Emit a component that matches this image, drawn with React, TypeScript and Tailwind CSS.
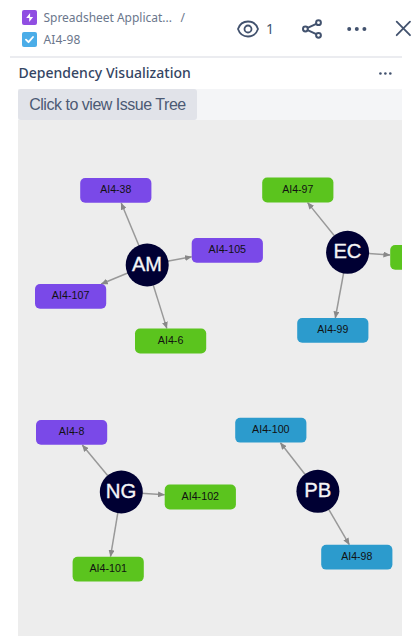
import React from "react";

const PURPLE = "#7a49e8";
const GREEN = "#5bc41e";
const BLUE = "#2c9bcd";

type Issue = { id: string; x: number; y: number; fill: string; w: number };
type Person = { name: string; x: number; y: number; w: number };

const issues: Issue[] = [
  { id: "AI4-38", x: 80.2, y: 178, fill: PURPLE, w: 31 },
  { id: "AI4-107", x: 35, y: 284, fill: PURPLE, w: 37.5 },
  { id: "AI4-105", x: 191.7, y: 238, fill: PURPLE, w: 37.5 },
  { id: "AI4-6", x: 135, y: 328.6, fill: GREEN, w: 25.5 },
  { id: "AI4-97", x: 262.2, y: 177.6, fill: GREEN, w: 31 },
  { id: "AI4-103", x: 390.2, y: 245, fill: GREEN, w: 37.5 },
  { id: "AI4-99", x: 297.2, y: 318, fill: BLUE, w: 31 },
  { id: "AI4-8", x: 36, y: 420, fill: PURPLE, w: 25.5 },
  { id: "AI4-102", x: 164.7, y: 484.6, fill: GREEN, w: 37.5 },
  { id: "AI4-101", x: 72.6, y: 556.8, fill: GREEN, w: 37.5 },
  { id: "AI4-100", x: 235.2, y: 417.8, fill: BLUE, w: 37.5 },
  { id: "AI4-98", x: 321.2, y: 544.8, fill: BLUE, w: 31 },
];

const people: Person[] = [
  { name: "AM", x: 147.2, y: 265, w: 30 },
  { name: "EC", x: 347.6, y: 252.3, w: 28 },
  { name: "NG", x: 121.3, y: 492, w: 30.5 },
  { name: "PB", x: 317.9, y: 491.3, w: 27 },
];

const edges: [number, number, number, number][] = [
  [147, 265, 121.2, 203],
  [147, 265, 101.2, 284],
  [147, 265, 191.6, 256.8],
  [147, 265, 166.8, 328.4],
  [347.5, 252, 307.6, 202.6],
  [347.5, 252, 390, 255],
  [347.5, 252, 335.3, 318],
  [121.3, 492, 82.3, 445],
  [121.3, 492, 164.6, 494.8],
  [121.3, 492, 110.5, 556.6],
  [318, 491, 280.4, 442.8],
  [318, 491, 349.3, 544.6],
];

function Graph() {
  return (
    <svg className="block h-[516px] w-[384px]" viewBox="18 120 384 516">
      <defs>
        <marker id="arrow" viewBox="0 0 7 6" refX="6.6" refY="3" markerWidth="7" markerHeight="6" markerUnits="userSpaceOnUse" orient="auto">
          <path d="M0 0L7 3L0 6Z" fill="#888" />
        </marker>
      </defs>
      {edges.map(([x1, y1, x2, y2], i) => (
        <line key={i} x1={x1} y1={y1} x2={x2} y2={y2} stroke="#999" strokeWidth="1.5" markerEnd="url(#arrow)" />
      ))}
      {issues.map((n) => (
        <g key={n.id}>
          <rect x={n.x} y={n.y} width="71.2" height="24.8" rx="5" fill={n.fill} />
          {n.x < 380 && (
            <text x={n.x + 35.6} y={n.y + 15.3} textAnchor="middle" textLength={n.w} lengthAdjust="spacingAndGlyphs" fontSize="10.4" fill="#111" className="font-['Liberation_Sans',Arial,sans-serif]">
              {n.id}
            </text>
          )}
        </g>
      ))}
      {people.map((p) => (
        <g key={p.name}>
          <circle cx={p.x} cy={p.y} r="21.5" fill="#000033" />
          <text x={p.x - 0.2} y={p.y + 5.5} textAnchor="middle" textLength={p.w} lengthAdjust="spacingAndGlyphs" fontSize="20.5" fill="#f4f4f6" stroke="#f4f4f6" strokeWidth="0.35" className="font-['Liberation_Sans',Arial,sans-serif]">
            {p.name}
          </text>
        </g>
      ))}
    </svg>
  );
}

function Dots({ className }: { className: string }) {
  return (
    <svg className={className} viewBox="0 0 20 4" fill="#42526e">
      <circle cx="2.2" cy="2" r="2" />
      <circle cx="9.8" cy="2" r="2" />
      <circle cx="17.4" cy="2" r="2" />
    </svg>
  );
}

export default function App() {
  return (
    <div className="h-[636px] w-[419px] overflow-hidden bg-white font-['Noto_Sans','Open_Sans',sans-serif] text-[#42526e]">
      <header className="flex h-[56px] w-[419px]">
        <div className="flex w-[237px] flex-col pt-[9px] pl-[21.5px] text-[12px] text-[#6b778c]">
          <div className="flex h-[17px] items-center whitespace-nowrap">
            <svg className="mr-[7px] size-[15px] shrink-0" viewBox="0 0 15 15">
              <rect width="15" height="15" rx="2" fill="#904ee2" />
              <path d="M8.1 3.1L4.2 8h3v4l3.9-5h-3Z" fill="#fff" />
            </svg>
            <span className="w-[127px] tracking-[-0.02px]">Spreadsheet Applicat...</span>
            <span className="ml-[10px]">/</span>
          </div>
          <div className="mt-[5px] flex h-[17px] items-center">
            <svg className="mr-[7px] size-[15px] shrink-0" viewBox="0 0 15 15">
              <rect width="15" height="15" rx="2" fill="#4bade8" />
              <path d="M4 7.7L6.5 10.2L11 5" fill="none" stroke="#fff" strokeWidth="1.9" strokeLinecap="round" strokeLinejoin="round" />
            </svg>
            <span className="tracking-[0.15px]">AI4-98</span>
          </div>
        </div>
        <div className="flex h-[57px] items-center">
          <svg className="h-[18px] w-[22px]" viewBox="0 0 22 18" fill="none" stroke="#42526e" strokeWidth="1.8">
            <path d="M1 9C2.6 4.3 6.3 1.5 11 1.5S19.4 4.3 21 9C19.4 13.7 15.7 16.5 11 16.5S2.6 13.7 1 9Z" />
            <circle cx="11" cy="9" r="3.5" />
          </svg>
          <span className="ml-[7px] w-[9px] text-[14px]">1</span>
          <svg className="ml-[27px] h-[20px] w-[21px]" viewBox="0 0 21 20" fill="none" stroke="#42526e" strokeWidth="2">
            <circle cx="3.4" cy="10" r="2.4" />
            <circle cx="16.5" cy="3.7" r="2.4" />
            <circle cx="16.5" cy="16.3" r="2.4" />
            <path d="M5.6 8.9L14.3 4.8M5.6 11.1L14.3 15.2" />
          </svg>
          <Dots className="ml-[23.5px] h-[4px] w-[20px]" />
          <svg className="ml-[28px] h-[17px] w-[17px]" viewBox="0 0 17 17" fill="none" stroke="#42526e" strokeWidth="1.8" strokeLinecap="round">
            <path d="M1.7 1.7L15 15.2M15 1.7L1.7 15.2" />
          </svg>
        </div>
      </header>
      <div className="ml-[10px] h-[2px] w-[392px] bg-[#ebecf0]" />
      <main className="ml-[18px] w-[384px]">
        <div className="flex h-[31px] items-center justify-between pr-[10px] pb-[3px] pl-[0.5px]">
          <h1 className="whitespace-nowrap text-[14px] font-medium tracking-[0.02px] text-[#344563]">Dependency Visualization</h1>
          <Dots className="mt-[3px] h-[3px] w-[13px]" />
        </div>
        <div className="flex h-[31px] bg-[#f4f5f7]">
          <button className="flex h-[31px] w-[179px] items-center justify-center rounded-[3px] bg-[#e1e3e9] font-['Liberation_Sans',Arial,sans-serif] text-[16px] tracking-[-0.48px] whitespace-nowrap text-[#4c5a74]">
            Click to view Issue Tree
          </button>
        </div>
        <div className="overflow-hidden bg-[#ededed]">
          <Graph />
        </div>
      </main>
    </div>
  );
}
